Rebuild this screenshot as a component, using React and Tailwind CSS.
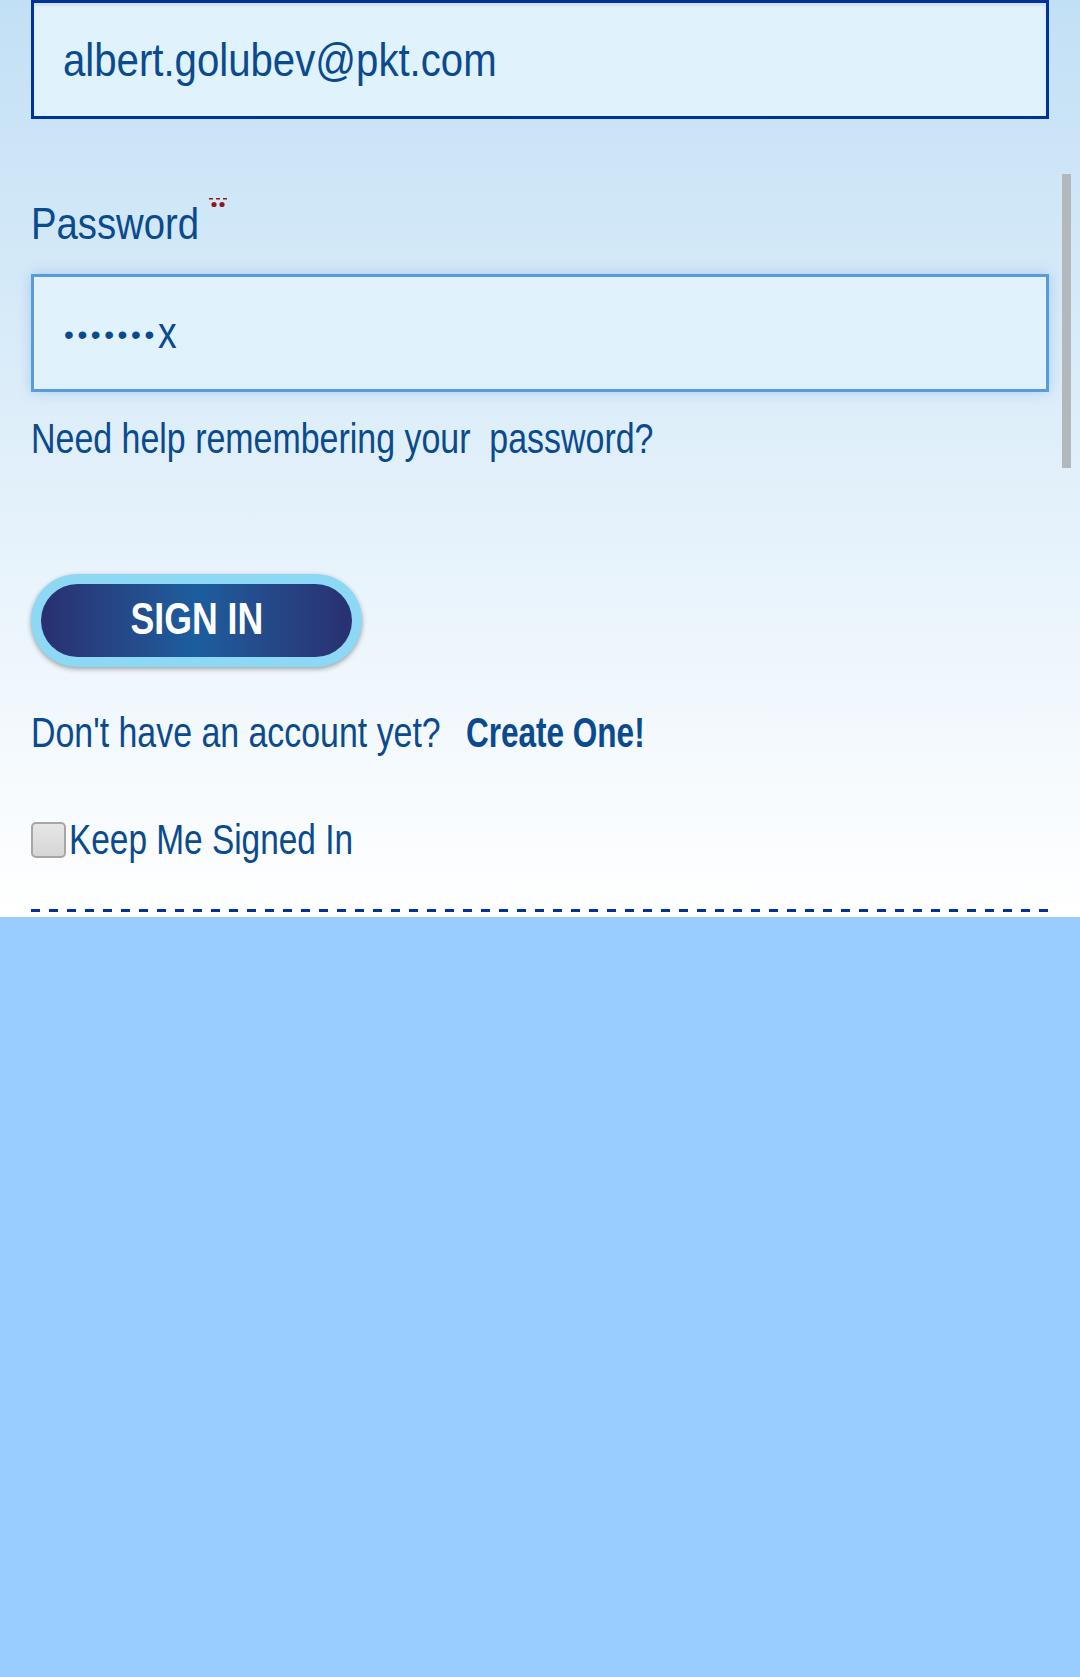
import React from 'react';

// narrow font isn't installed, so squeeze Liberation Sans horizontally
function Squeeze({ w, className, children }) {
  return (
    <span className={`inline-block whitespace-pre ${w}`}>
      <span className={`inline-block origin-left whitespace-pre ${className}`}>{children}</span>
    </span>
  );
}

export default function App() {
  return (
    <div className="min-h-[1677px] flex flex-col bg-[#99ccff] font-['Liberation_Sans',Arial,sans-serif] text-[#0a4a8f]">
      {/* Sign in form */}
      <section className="relative h-[917px] px-[31px] flex flex-col bg-linear-to-b from-[#c2e0f5] to-white">
        <div className="h-[119px] border-[3px] border-[#003399] bg-[#e0f2fc] shadow-[inset_0_3px_3px_rgba(0,40,120,0.08)] flex items-center pl-[29px]">
          <Squeeze w="w-[432px]" className="scale-x-[0.873] text-[46px] leading-none">albert.golubev@pkt.com</Squeeze>
        </div>

        <div className="mt-[81px] h-[48px] flex items-center">
          <Squeeze w="w-[167px]" className="scale-x-[0.87] text-[44px] leading-none">Password</Squeeze>
          <svg width="20" height="10" viewBox="0 0 20 10" className="ml-[10px] -mt-[42px]">
            <rect x="1" y="0" width="4" height="1.5" fill="#8b1a1a" />
            <rect x="8" y="0" width="4" height="1.5" fill="#8b1a1a" />
            <rect x="15" y="0" width="4" height="1.5" fill="#8b1a1a" />
            <circle cx="6" cy="6.5" r="2.6" fill="#8b1a1a" />
            <circle cx="14" cy="6.5" r="2.6" fill="#8b1a1a" />
          </svg>
        </div>

        <div className="mt-[26px] h-[118px] border-[3px] border-[#5a9be0] bg-[#e0f2fc] shadow-[0_0_12px_rgba(110,165,230,0.45)] flex items-center pl-[30px]">
          <span className="text-[28px] leading-none tracking-[3.6px] mt-[4px]">•••••••</span>
          <Squeeze w="w-[20px]" className="scale-x-[0.85] text-[44px] leading-none">x</Squeeze>
        </div>

        <div className="mt-[27px] h-[40px] flex items-center">
          <Squeeze w="w-[621px]" className="scale-x-[0.808] text-[42px] leading-none">Need help remembering your  password?</Squeeze>
        </div>

        <div className="mt-[115px]">
          <button className="w-[331px] h-[93px] rounded-full bg-[#8dd8f5] p-[10px] shadow-[0_2px_5px_rgba(0,0,0,0.35)]">
            <span className="w-full h-full rounded-full flex items-center justify-center bg-linear-to-r from-[#283070] via-[#1b5e9e] to-[#283070] text-white font-bold text-[44px] leading-none">
              <span className="inline-block scale-x-[0.81] -mt-[4px]">SIGN IN</span>
            </span>
          </button>
        </div>

        <div className="mt-[46px] h-[40px] flex items-center text-[42px] leading-none">
          <Squeeze w="w-[610px]" className="scale-x-[0.807]">
            <span>Don't have an account yet?</span>
            <a className="ml-[31px] font-bold scale-x-[0.93] inline-block origin-left">Create One!</a>
          </Squeeze>
        </div>

        <label className="mt-[67px] h-[40px] flex items-center gap-[3px]">
          <span className="w-[35px] h-[36px] rounded-[5px] border-2 border-[#a6a6a6] bg-linear-to-b from-[#e6e6e6] to-[#d6d6d6]" />
          <Squeeze w="w-[284px]" className="scale-x-[0.795] text-[42px] leading-none">Keep Me Signed In</Squeeze>
        </label>

        <div className="mt-[49px] h-[3px] bg-[repeating-linear-gradient(90deg,#003399_0_9px,transparent_9px_18px)]" />

        {/* scrollbar */}
        <div className="absolute left-[1062px] top-[174px] w-[9px] h-[294px] bg-[#b3b8bd]" />
      </section>

      <div className="flex-1 bg-[#99ccff]" />
    </div>
  );
}
